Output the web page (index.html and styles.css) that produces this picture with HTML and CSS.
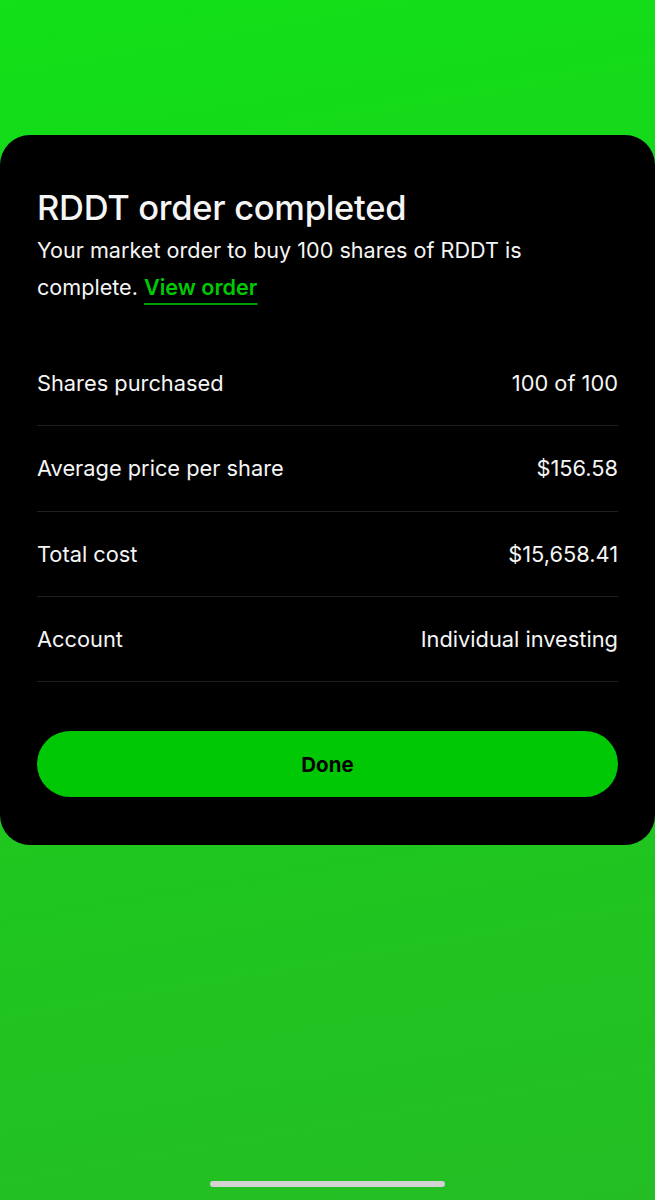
FILE: index.html
```html
<!DOCTYPE html>
<html lang="en">

<head>
  <meta charset="UTF-8" />
  <meta name="viewport" content="width=device-width, initial-scale=1.0" />
  <title>Order completed</title>
  <link rel="stylesheet" href="styles.css">
</head>

<body>
  <article class="sheet">
    <h1 class="title">RDDT order completed</h1>
    <p class="summary">
      <span>Your market order to buy 100 shares of RDDT is</span><br>
      <span>complete.</span> <a class="link" href="#">View order</a>
    </p>
    <section class="details">
      <div class="row"><span>Shares purchased</span><span>100 of 100</span></div>
      <div class="row"><span>Average price per share</span><span>$156.58</span></div>
      <div class="row"><span>Total cost</span><span>$15,658.41</span></div>
      <div class="row"><span>Account</span><span>Individual investing</span></div>
    </section>
    <button class="done">Done</button>
  </article>
  <div class="home-bar"></div>
</body>

</html>
```

FILE: styles.css
```css
html,
body {
  margin: 0;
  height: 1200px;
}

body {
  background: linear-gradient(170deg, rgb(18, 224, 24) 0%, rgb(30, 200, 30) 60%, rgb(36, 190, 36) 100%);
  font-family: Inter, "Noto Sans", sans-serif;
  color: rgb(245, 245, 245);
  display: flex;
  flex-direction: column;
  overflow: hidden;
}

.sheet {
  margin-top: 135px;
  height: 710px;
  box-sizing: border-box;
  padding: 53px 37px 0;
  background-color: #000;
  border-radius: 30px;
}

.title {
  margin: 0;
  font-size: 34.5px;
  line-height: 40px;
  font-weight: 500;
  letter-spacing: -0.3px;
}

.summary {
  margin: 4px 0 0;
  font-size: 21.6px;
  line-height: 37px;
  font-weight: 400;
}

.link {
  color: rgb(0, 200, 5);
  font-weight: 600;
  text-decoration: underline;
  text-decoration-color: rgb(0, 160, 5);
  text-decoration-thickness: 1.5px;
  text-underline-offset: 8px;
}

.details {
  margin-top: 35px;
}

.row {
  height: 85.3px;
  box-sizing: border-box;
  border-bottom: 1px solid rgb(32, 32, 32);
  display: flex;
  justify-content: space-between;
  align-items: center;
  font-size: 21.8px;
}

.done {
  display: block;
  width: 100%;
  height: 66px;
  margin-top: 49px;
  border: none;
  border-radius: 33px;
  background-color: rgb(0, 200, 5);
  color: #000;
  font-family: inherit;
  font-size: 20.5px;
  font-weight: 700;
}

.home-bar {
  margin: auto auto 13px;
  width: 235px;
  height: 6px;
  border-radius: 3px;
  background-color: rgb(210, 210, 210);
}
```
